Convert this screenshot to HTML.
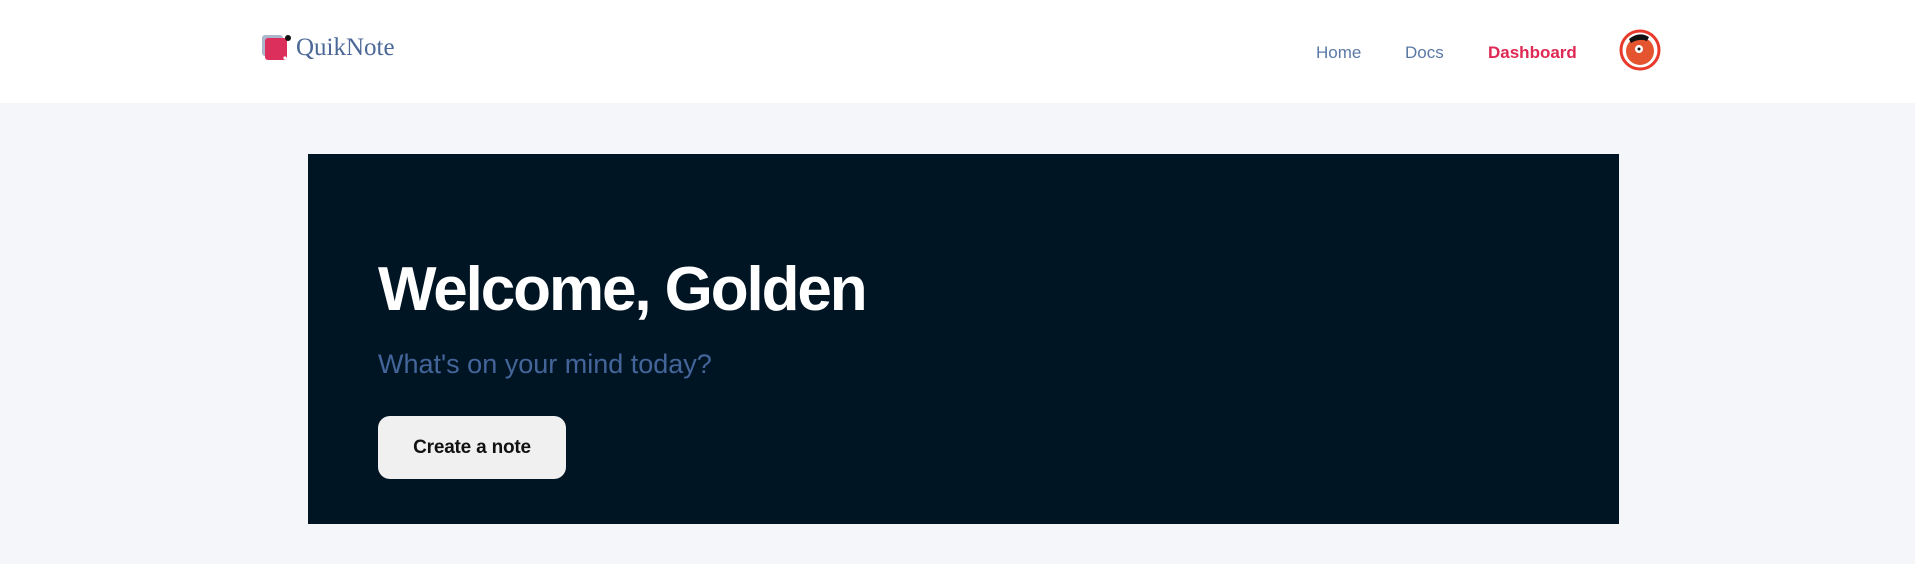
<!DOCTYPE html>
<html><head><meta charset="utf-8"><style>
*{margin:0;padding:0;box-sizing:border-box}
body{width:1915px;height:564px;background:#f4f6f9;font-family:"Liberation Sans",sans-serif;position:relative;overflow:hidden}
header{position:absolute;left:0;top:0;width:1915px;height:103px;background:#fff}
.logo{position:absolute;left:296px;top:34px;font-family:"Liberation Serif",serif;font-size:25px;color:#4b6897}
.nav{position:absolute;top:43px;font-size:17px;color:#5a78a6}
.hero{position:absolute;left:308px;top:154px;width:1311px;height:370px;background:#001524}
h1{position:absolute;left:70px;top:100px;font-size:62px;color:#fff;font-weight:bold;letter-spacing:-2.1px;white-space:nowrap}
.sub{position:absolute;left:70px;top:195px;font-size:27px;color:#44659a;white-space:nowrap}
.btn{position:absolute;left:70px;top:262px;width:188px;height:63px;background:#f0f0f0;border-radius:12px;font-size:19px;font-weight:bold;color:#111;text-align:center;line-height:63px;letter-spacing:-0.2px}
</style></head><body>
<header>
<svg style="position:absolute;left:261px;top:33px" width="32" height="32" viewBox="0 0 32 32">
<rect x="1" y="2" width="21" height="21" rx="3" fill="#a9b6cc"/>
<rect x="4" y="5" width="22" height="22" rx="3" fill="#dd2f5b"/>
<circle cx="27" cy="5" r="3" fill="#111"/>
<circle cx="24" cy="25" r="1.6" fill="#fff"/>
</svg>
<div class="logo">QuikNote</div>
<div class="nav" style="left:1316px">Home</div>
<div class="nav" style="left:1405px">Docs</div>
<div class="nav" style="left:1488px;color:#df2853;font-weight:bold">Dashboard</div>
<svg style="position:absolute;left:1619px;top:29px" width="42" height="42" viewBox="0 0 42 42">
<circle cx="21" cy="21" r="19" fill="#fff" stroke="#e83a2a" stroke-width="3"/>
<circle cx="21" cy="22" r="14" fill="#e4552f"/>
<path d="M10 10 Q20 2 30 8 L28 12 Q20 9 12 14Z" fill="#111"/>
<circle cx="20" cy="20" r="4" fill="#fff"/><circle cx="20" cy="20" r="1.5" fill="#111"/>
</svg>
</header>
<div class="hero">
<h1>Welcome, Golden</h1>
<div class="sub">What's on your mind today?</div>
<div class="btn">Create a note</div>
</div>
</body></html>
